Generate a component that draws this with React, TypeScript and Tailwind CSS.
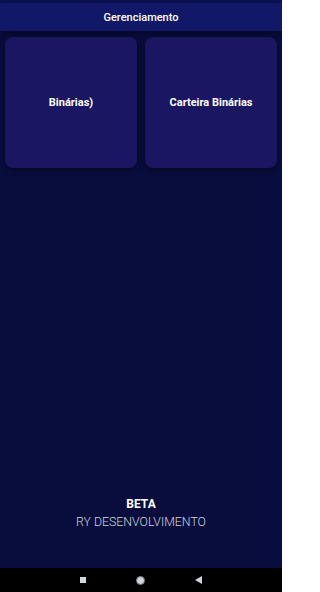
export default function App() {
  return (
    <div
      className="w-[282px] h-[592px] flex flex-col bg-[#090d3d] text-white overflow-hidden"
      style={{ fontFamily: "Roboto, 'Liberation Sans', sans-serif" }}
    >
      <div className="h-[3px] bg-[#0b1052]" />
      <header className="h-[28px] pt-[2px] flex items-center justify-center bg-[#111867] shadow-[0_2px_6px_rgba(0,0,0,0.45)] z-10">
        <span className="text-[11px] font-medium">Gerenciamento</span>
      </header>

      <div className="grid grid-cols-2 gap-2 px-[5px] pt-[6px]">
        <Card label="Binárias)" />
        <Card label="Carteira Binárias" />
      </div>

      <div className="flex-1" />

      <div className="flex flex-col items-center pb-[36px]">
        <span className="text-[12px] font-bold leading-4">BETA</span>
        <span className="text-[12.3px] font-light text-gray-300 leading-5">RY DESENVOLVIMENTO</span>
      </div>

      <nav className="h-[24px] bg-black flex items-center justify-center gap-[50px]">
        <span className="w-[6px] h-[6px] bg-gray-300" />
        <span className="w-[9px] h-[9px] rounded-full bg-gray-300 border border-gray-500" />
        <svg width="7" height="8" viewBox="0 0 7 8">
          <path d="M7 0 L7 8 L0 4 Z" fill="#d1d5db" />
        </svg>
      </nav>
    </div>
  );
}

function Card({ label }: { label: string }) {
  return (
    <div className="h-[131px] pt-[2px] rounded-lg bg-[#1a1662] shadow-[0_2px_6px_rgba(0,0,0,0.5)] flex items-center justify-center">
      <span className="text-[11px] font-bold">{label}</span>
    </div>
  );
}
